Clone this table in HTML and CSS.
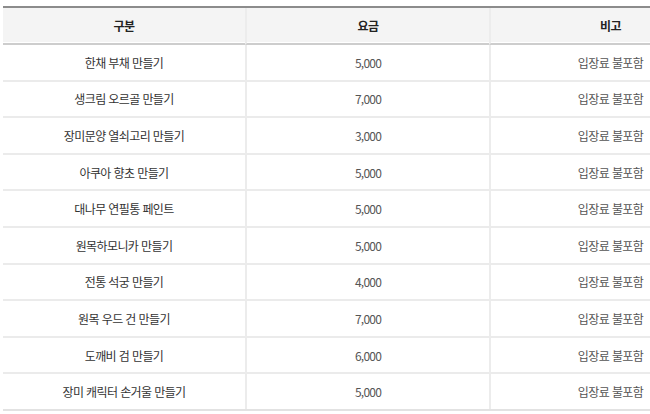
FILE: index.html
```html
<!DOCTYPE html>
<html lang="ko">
<head>
<meta charset="utf-8">
<link rel="stylesheet" href="styles.css">
</head>
<body>
<table class="price-table">
  <colgroup>
    <col class="c1"><col class="c2"><col class="c3">
  </colgroup>
  <thead>
    <tr><th>구분</th><th>요금</th><th class="note">비고</th></tr>
  </thead>
  <tbody>
    <tr><td>한채 부채 만들기</td><td>5,000</td><td class="note">입장료 불포함</td></tr>
    <tr><td>생크림 오르골 만들기</td><td>7,000</td><td class="note">입장료 불포함</td></tr>
    <tr><td>장미문양 열쇠고리 만들기</td><td>3,000</td><td class="note">입장료 불포함</td></tr>
    <tr><td>아쿠아 향초 만들기</td><td>5,000</td><td class="note">입장료 불포함</td></tr>
    <tr><td>대나무 연필통 페인트</td><td>5,000</td><td class="note">입장료 불포함</td></tr>
    <tr><td>원목하모니카 만들기</td><td>5,000</td><td class="note">입장료 불포함</td></tr>
    <tr><td>전통 석궁 만들기</td><td>4,000</td><td class="note">입장료 불포함</td></tr>
    <tr><td>원목 우드 건 만들기</td><td>7,000</td><td class="note">입장료 불포함</td></tr>
    <tr><td>도깨비 검 만들기</td><td>6,000</td><td class="note">입장료 불포함</td></tr>
    <tr><td>장미 캐릭터 손거울 만들기</td><td>5,000</td><td class="note">입장료 불포함</td></tr>
  </tbody>
</table>
</body>
</html>
```
FILE: styles.css
```css
html, body {
  margin: 0;
  padding: 0;
  background: #fff;
  overflow: hidden;
}
body {
  padding: 6px 0 0 3px;
  font-family: "Noto Sans CJK KR", "Noto Sans", sans-serif;
  font-size: 12px;
  color: #333;
}
.price-table {
  width: 647px;
  table-layout: fixed;
  border-collapse: separate;
  border-spacing: 0;
  border-top: 2px solid #8c8c8c;
  border-bottom: 2px solid #e2e2e2;
}
.c1 { width: 242px; }
.c2 { width: 244px; }
.c3 { width: 161px; }
.price-table th {
  height: 35px;
  padding: 0;
  background: #f4f4f4;
  font-weight: bold;
  color: #222;
  text-align: center;
  vertical-align: middle;
  border-bottom: 2px solid #cdcdcd;
  box-shadow: inset 0 -1px 0 #fff;
  letter-spacing: -0.5px;
}
.price-table td {
  height: 34.6px;
  padding: 0;
  text-align: center;
  vertical-align: middle;
  border-bottom: 2px solid #ebebeb;
  letter-spacing: -0.6px;
}
.price-table tbody tr:last-child td {
  border-bottom: 0;
}
.price-table th + th,
.price-table td + td {
  border-left: 2px solid #ececec;
}
.price-table td:nth-child(2) {
  color: #555;
  letter-spacing: -0.8px;
}
.price-table .note {
  padding-left: 80px;
  white-space: nowrap;
}
.price-table td.note {
  color: #555;
}
```
